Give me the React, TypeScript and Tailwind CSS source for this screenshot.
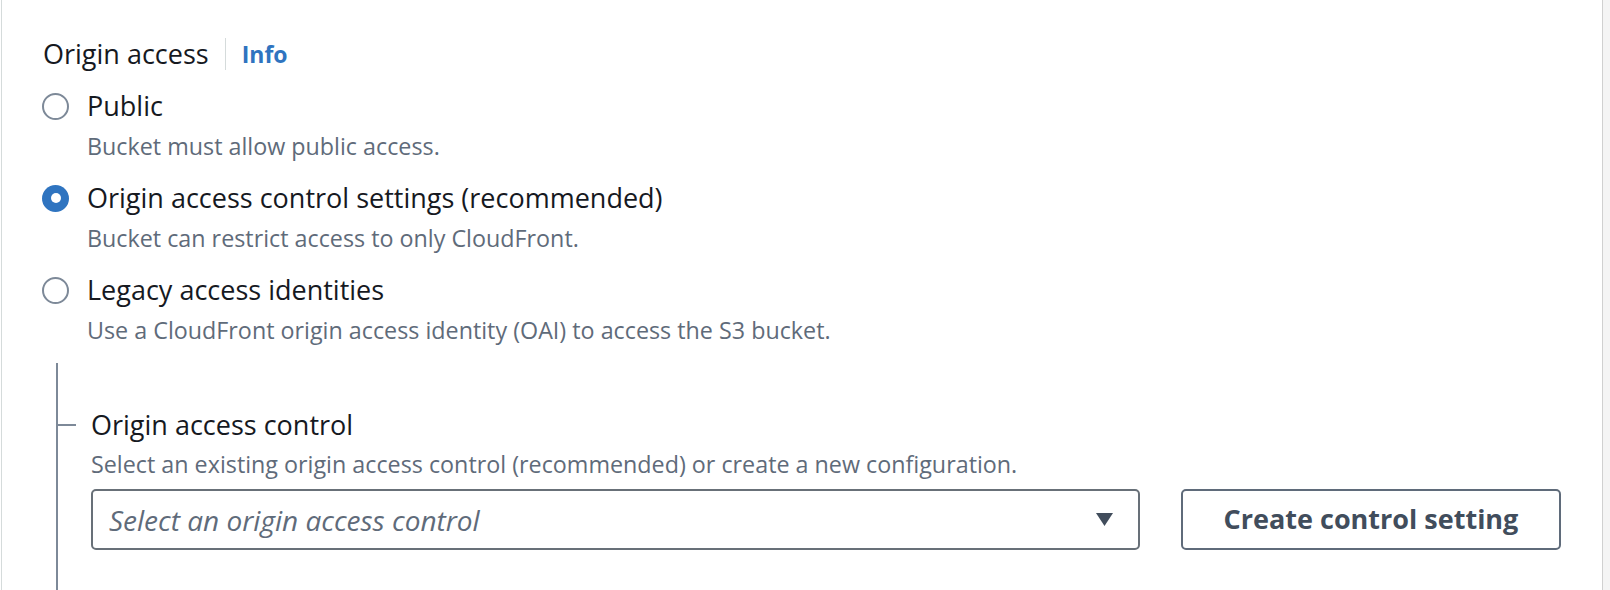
import { useState } from 'react';

const options = [
  { id: 'public', label: 'Public', desc: 'Bucket must allow public access.' },
  { id: 'oac', label: 'Origin access control settings (recommended)', desc: 'Bucket can restrict access to only CloudFront.' },
  { id: 'legacy', label: 'Legacy access identities', desc: 'Use a CloudFront origin access identity (OAI) to access the S3 bucket.' },
];

function Radio({ checked }: { checked: boolean }) {
  if (checked) {
    return <span className="w-[27px] h-[27px] rounded-full bg-[#2f74c0] flex items-center justify-center shrink-0">
      <span className="w-[10px] h-[10px] rounded-full bg-white" />
    </span>;
  }
  return <span className="w-[27px] h-[27px] rounded-full border-2 border-[#7d8998] bg-white shrink-0" />;
}

export default function App() {
  const [selected, setSelected] = useState('oac');

  return (
    <div className="flex h-[590px] w-full bg-white overflow-hidden text-[#16191f]" style={{ fontFamily: '"Open Sans", "Noto Sans", sans-serif' }}>
      <main className="flex-1 ml-[1px] border-l border-[#d5dbdb] pl-[40px] pt-[38px]">
        <div className="flex items-center ml-[1px] h-[32px]">
          <span className="text-[27px] leading-[32px]">Origin access</span>
          <span className="mx-[16px] w-px h-[32px] bg-[#d5dbdb]" />
          <span className="text-[23px] font-bold text-[#2f74c0]">Info</span>
        </div>

        <div className="mt-[20px] flex flex-col gap-[23px]">
          {options.map((o) => (
            <label key={o.id} className="block cursor-pointer" onClick={() => setSelected(o.id)}>
              <div className="flex items-center gap-[18px] h-[32px]">
                <Radio checked={selected === o.id} />
                <span className="text-[27px] leading-[32px]">{o.label}</span>
              </div>
              <div className="mt-[11px] pl-[45px] text-[23.3px] leading-[26px] text-[#5f6b7a]">{o.desc}</div>
            </label>
          ))}
        </div>

        <div className="mt-[20px] ml-[14px] border-l-2 border-[#7d8998] h-[240px] pt-[46px]">
          <div className="flex items-center h-[32px]">
            <span className="w-[18px] h-[2px] bg-[#7d8998]" />
            <span className="ml-[15px] text-[27px] leading-[32px]">Origin access control</span>
          </div>
          <div className="mt-[10px] pl-[33px] text-[23.3px] leading-[26px] text-[#5f6b7a]">
            Select an existing origin access control (recommended) or create a new configuration.
          </div>
          <div className="mt-[12px] pl-[33px] flex items-center gap-[41px]">
            <button className="w-[1049px] h-[61px] rounded-[5px] border-2 border-[#687078] bg-white flex items-center justify-between pl-[16px] pr-[24px]">
              <span className="italic text-[28px] text-[#5f6b7a]">Select an origin access control</span>
              <svg width="19" height="15" viewBox="0 0 19 15">
                <path d="M1 1h17L9.5 14z" fill="#414d5c" />
              </svg>
            </button>
            <button className="w-[380px] h-[61px] rounded-[5px] border-2 border-[#5f6b7a] bg-white text-[27px] font-bold text-[#414d5c]">
              Create control setting
            </button>
          </div>
        </div>
      </main>
      <div className="w-[8px] h-full border-l border-[#d0d0d0] bg-[#f4f4f4]" />
    </div>
  );
}
